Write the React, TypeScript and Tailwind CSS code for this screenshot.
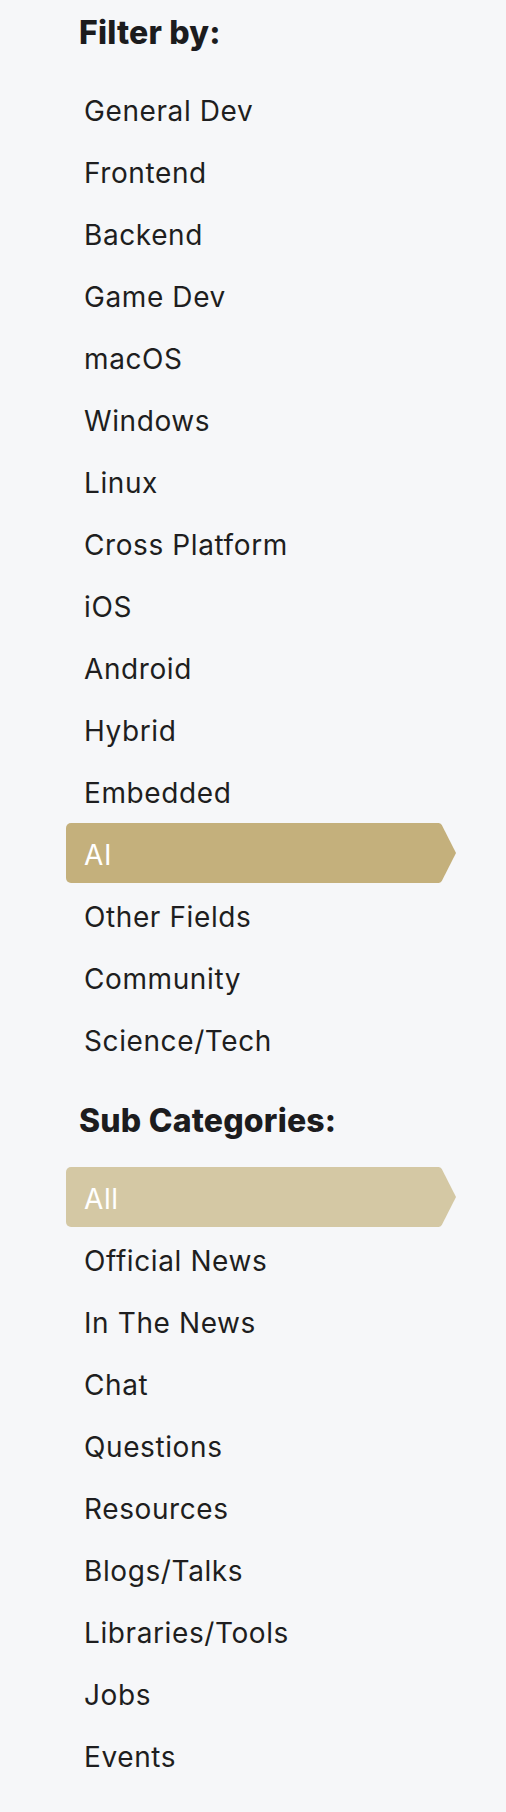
const categories = [
  'General Dev',
  'Frontend',
  'Backend',
  'Game Dev',
  'macOS',
  'Windows',
  'Linux',
  'Cross Platform',
  'iOS',
  'Android',
  'Hybrid',
  'Embedded',
  'AI',
  'Other Fields',
  'Community',
  'Science/Tech',
];

const subCategories = [
  'All',
  'Official News',
  'In The News',
  'Chat',
  'Questions',
  'Resources',
  'Blogs/Talks',
  'Libraries/Tools',
  'Jobs',
  'Events',
];

function Item({ label, active, color }: { label: string; active?: boolean; color?: string }) {
  if (!active) {
    return (
      <li className="h-[60px] mb-[2px] flex items-center pl-[18px] pt-[3px] text-[28px] tracking-[0.6px] text-[#1e1e20] cursor-pointer">
        {label}
      </li>
    );
  }
  return (
    <li className="h-[60px] mb-[2px] flex cursor-pointer">
      <div
        className={`flex-1 flex items-center pl-[18px] pt-[3px] rounded-l-[5px] text-[28px] tracking-[0.6px] text-white ${color}`}
      >
        {label}
      </div>
      <svg width="19" height="60" viewBox="0 0 19 60" className={color === 'bg-[#c4b07c]' ? 'fill-[#c4b07c]' : 'fill-[#d4c8a4]'}>
        <path d="M0 0 H1.5 Q3.5 0 4.8 2 L19 30 L4.8 58 Q3.5 60 1.5 60 H0 Z" />
      </svg>
    </li>
  );
}

export default function App() {
  return (
    <div
      className="min-h-[1812px] w-full bg-[#f6f7f9] pt-[13px]"
      style={{ fontFamily: 'Inter, "Noto Sans", sans-serif' }}
    >
      <div className="ml-[66px] w-[390px]">
        <h2 className="pl-[13px] text-[32px] leading-[40px] font-extrabold tracking-[0.2px] text-[#1c1c1e] mb-[26px]">
          Filter by:
        </h2>
        <ul>
          {categories.map((c) => (
            <Item key={c} label={c} active={c === 'AI'} color="bg-[#c4b07c]" />
          ))}
        </ul>
        <h2 className="mt-[32px] pl-[13px] text-[32px] leading-[40px] font-extrabold tracking-[0.2px] text-[#1c1c1e] mb-[26px]">
          Sub Categories:
        </h2>
        <ul>
          {subCategories.map((c) => (
            <Item key={c} label={c} active={c === 'All'} color="bg-[#d4c8a4]" />
          ))}
        </ul>
      </div>
    </div>
  );
}
